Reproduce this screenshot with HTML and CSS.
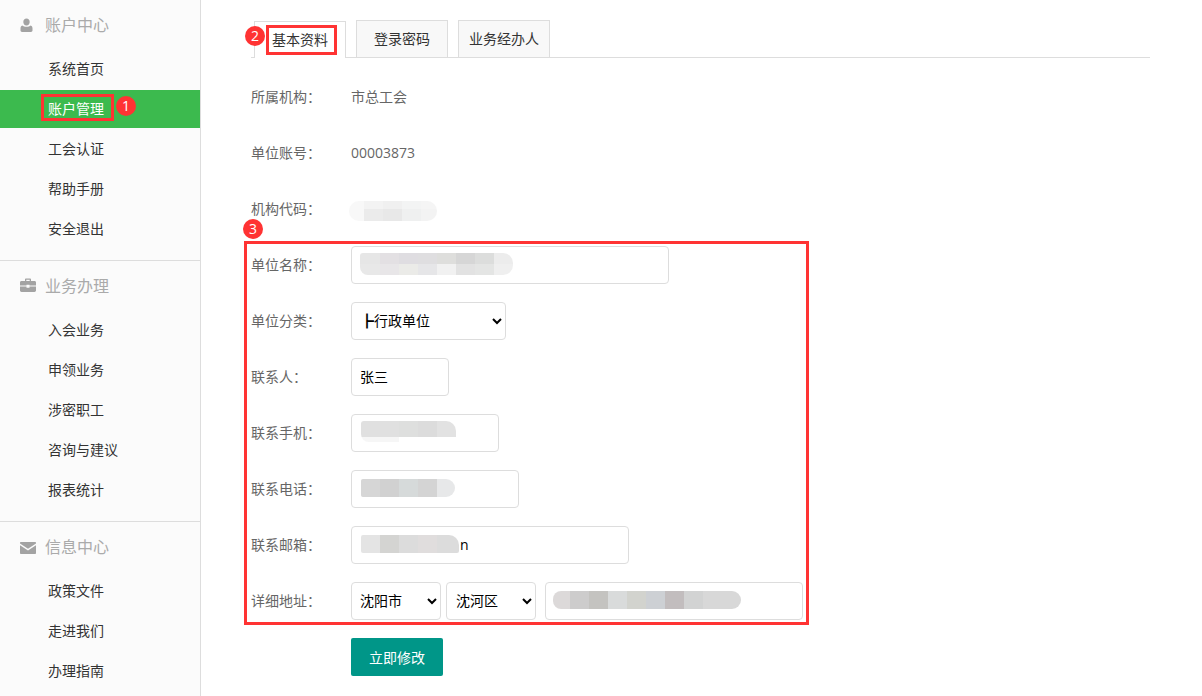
FILE: index.html
```html
<!DOCTYPE html>
<html lang="zh-CN">
<head>
    <meta charset="UTF-8">
    <title>账户管理</title>
    <link rel="stylesheet" href="styles.css">
</head>
<body>
    <div class="sidebar">
        <div class="side-group">
            <div class="side-head">
                <span class="side-icon">
                    <svg width="16" height="16" viewBox="0 0 16 16"><path d="M6.5 1.5c1.9 0 3.2 1.5 3.2 3.4S8.400 8.500 6.500 8.500 3.300 6.800 3.300 4.900 4.600 1.500 6.500 1.500zM2.300 8.400c.8.900 2.500 1.300 4.200 1.300s3.400-.4 4.200-1.300c1.200.3 1.800 1.500 1.800 3.200v2c0 .9-.7 1.400-1.500 1.400H2c-.8 0-1.500-.5-1.500-1.400v-2c0-1.700.6-2.900 1.800-3.200z"/></svg>
                </span>
                账户中心
            </div>
            <a class="side-item">系统首页</a>
            <a class="side-item active">账户管理</a>
            <a class="side-item">工会认证</a>
            <a class="side-item">帮助手册</a>
            <a class="side-item">安全退出</a>
        </div>
        <div class="side-group">
            <div class="side-head">
                <span class="side-icon">
                    <svg width="16" height="16" viewBox="0 1 16 16"><path d="M5 2.500C5 1.900 5.500 1.500 6 1.500h4c.5 0 1 .4 1 1V4h3.500c.8 0 1.500.6 1.500 1.400V8.500H9.500V7.800h-3v.7H0V5.400C0 4.600.7 4 1.500 4H5V2.500zM6.300 2.800V4h3.400V2.800H6.300zM0 9.500h6.500v1.200h3V9.500H16v4.100c0 .8-.7 1.400-1.500 1.400h-13C.7 15 0 14.400 0 13.600V9.500z"/></svg>
                </span>
                业务办理
            </div>
            <a class="side-item">入会业务</a>
            <a class="side-item">申领业务</a>
            <a class="side-item">涉密职工</a>
            <a class="side-item">咨询与建议</a>
            <a class="side-item">报表统计</a>
        </div>
        <div class="side-group">
            <div class="side-head">
                <span class="side-icon">
                    <svg width="16" height="16" viewBox="0 -1 16 16"><path d="M0 2.600C0 2.200.4 2 .8 2h14.400c.4 0 .8.200.8.600v.9L8 8.800 0 3.500v-.9zM0 5.200l8 5.300 8-5.300v8c0 .5-.4.800-.8.800H.8c-.4 0-.8-.3-.8-.8v-8z"/></svg>
                </span>
                信息中心
            </div>
            <a class="side-item">政策文件</a>
            <a class="side-item">走进我们</a>
            <a class="side-item">办理指南</a>
        </div>
    </div>

    <div class="main">
        <div class="tabs">
            <div class="tab tab-current">基本资料</div>
            <div class="tab">登录密码</div>
            <div class="tab">业务经办人</div>
        </div>

        <div class="form-row">
            <label>所属机构：</label>
            <span class="plain-value">市总工会</span>
        </div>
        <div class="form-row">
            <label>单位账号：</label>
            <span class="plain-value">00003873</span>
        </div>
        <div class="form-row">
            <label>机构代码：</label>
            <span class="mosaic mosaic-code"></span>
        </div>
        <div class="form-row">
            <label>单位名称：</label>
            <div class="field">
                <input class="w-318" type="text">
                <span class="mosaic mosaic-name"></span>
            </div>
        </div>
        <div class="form-row">
            <label>单位分类：</label>
            <select class="w-155"><option>┣行政单位</option></select>
        </div>
        <div class="form-row">
            <label>联系人：</label>
            <input class="w-98" type="text" value="张三">
        </div>
        <div class="form-row">
            <label>联系手机：</label>
            <div class="field">
                <input class="w-148" type="text">
                <span class="mosaic mosaic-mobile"></span>
            </div>
        </div>
        <div class="form-row">
            <label>联系电话：</label>
            <div class="field">
                <input class="w-168" type="text">
                <span class="mosaic mosaic-tel"></span>
            </div>
        </div>
        <div class="form-row">
            <label>联系邮箱：</label>
            <div class="field">
                <input class="w-278 mail-input" type="text" value="n">
                <span class="mosaic mosaic-mail"></span>
            </div>
        </div>
        <div class="form-row">
            <label>详细地址：</label>
            <select class="w-90"><option>沈阳市</option></select>
            <select class="w-90 next-select"><option>沈河区</option></select>
            <div class="field next-input">
                <input class="w-258" type="text">
                <span class="mosaic mosaic-addr"></span>
            </div>
        </div>
        <div class="form-row">
            <label></label>
            <button class="submit-btn">立即修改</button>
        </div>
    </div>

    <!-- red marks drawn on top of the screenshot -->
    <div class="mark-box mark-menu"></div>
    <div class="mark-box mark-tab"></div>
    <div class="mark-box mark-form"></div>
    <div class="mark-dot dot-1">1</div>
    <div class="mark-dot dot-2">2</div>
    <div class="mark-dot dot-3">3</div>
</body>
</html>
```

FILE: styles.css
```css
* {
    margin: 0;
    padding: 0;
    box-sizing: border-box;
}

html, body {
    height: 100%;
    overflow: hidden;
}

body {
    position: relative;
    display: flex;
    background: #fff;
    color: #666;
    font-family: "Open Sans", "Noto Sans CJK SC", sans-serif;
    font-size: 14px;
}

.sidebar {
    width: 201px;
    flex-shrink: 0;
    height: 100%;
    background: #fbfbfb;
    border-right: 1px solid #ddd;
}

.side-group {
    padding-bottom: 10px;
    border-bottom: 1px solid #ddd;
}

.side-group:last-child {
    border-bottom: none;
}

.side-head {
    height: 50px;
    display: flex;
    align-items: center;
    padding-left: 20px;
    padding-bottom: 2px;
    font-size: 16px;
    color: #aaa;
}

.side-icon {
    width: 25px;
    height: 16px;
    margin-top: 2px;
    display: flex;
}

.side-icon svg {
    fill: #a3a3a3;
}

.side-item {
    display: block;
    height: 38px;
    line-height: 38px;
    margin-bottom: 2px;
    padding-left: 48px;
    color: #333;
}

.side-item.active {
    background: #3cba4e;
    color: #fff;
}

.main {
    flex: 1;
    padding: 20px 52px 0 50px;
}

.tabs {
    display: flex;
    align-items: flex-end;
    gap: 10px;
    height: 38px;
    padding-left: 3px;
    margin-bottom: 20px;
    border-bottom: 1px solid #ddd;
}

.tab {
    width: 92px;
    height: 37px;
    line-height: 36px;
    text-align: center;
    color: #333;
    background: #f8f8f8;
    border: 1px solid #ddd;
    border-bottom: none;
}

.tab-current {
    height: 37px;
    margin-bottom: -1px;
    background: #fff;
}

.form-row {
    display: flex;
    align-items: center;
    height: 38px;
    margin-bottom: 18px;
}

.form-row label {
    width: 100px;
    flex-shrink: 0;
    padding-bottom: 2px;
    color: #666;
}

.plain-value {
    padding-bottom: 2px;
    color: #666;
}

input, select {
    height: 38px;
    border: 1px solid #ddd;
    border-radius: 4px;
    background: #fff;
    color: #000;
    font: inherit;
    outline: none;
}

input {
    padding: 0 8px 2px;
}

select {
    padding-left: 4px;
    padding-bottom: 2px;
}

.field {
    position: relative;
    display: flex;
}

.next-select {
    margin-left: 5px;
    padding-left: 5px;
}

.next-input {
    margin-left: 9px;
}

.w-90 { width: 90px; }
.w-98 { width: 98px; }
.w-148 { width: 148px; }
.w-155 { width: 155px; }
.w-168 { width: 168px; }
.w-258 { width: 258px; }
.w-278 { width: 278px; }
.w-318 { width: 318px; }

.mail-input {
    padding-left: 108px;
}

.submit-btn {
    width: 92px;
    height: 38px;
    border: none;
    border-radius: 2px;
    background: #009688;
    color: #fff;
    font: inherit;
}

/* blurred-out values */
.mosaic {
    display: block;
    height: 20px;
    border-radius: 3px 10px 10px 8px;
    background-repeat: no-repeat;
}

.field .mosaic {
    position: absolute;
}

.mosaic-code {
    width: 88px;
    margin-left: -2px;
    margin-top: 3px;
    border-radius: 10px;
    background-image:
        linear-gradient(90deg, #f8f8f8 0 15px, #f3f3f3 15px 34px, #f0f0f0 34px 53px, #f3f4f4 53px 72px, #f5f5f5 72px),
        linear-gradient(90deg, #f8f8f8 0 15px, #ebebeb 15px 34px, #e8e8e8 34px 53px, #eff0f0 53px 72px, #f3f3f3 72px);
    background-size: 100% 8px, 100% 12px;
    background-position: top, bottom;
}

.mosaic-name {
    left: 9px;
    top: 7px;
    width: 153px;
    height: 22px;
    background-image:
        linear-gradient(90deg, #e6e6e6 0 20px, #e3e0e3 20px 39px, #dfdde1 39px 58px, #dfdee0 58px 77px, #dededc 77px 96px, #d6d6d6 96px 115px, #dcdddc 115px 134px, #ececec 134px),
        linear-gradient(90deg, #e8e8e8 0 20px, #e8e6e8 20px 39px, #ebebe8 39px 58px, #e6e6e8 58px 77px, #f1f1f1 77px 96px, #e2e2e2 96px 115px, #e4e5e4 115px 134px, #efefef 134px);
    background-size: 100% 11px, 100% 11px;
    background-position: top, bottom;
}

.mosaic-mobile {
    left: 10px;
    top: 7px;
    width: 95px;
    height: 21px;
    border-radius: 3px 10px 0 8px;
    background-image:
        linear-gradient(90deg, #e0e0e0 0 38px, #dedfde 38px 57px, #dcdcdc 57px 76px, #e2e2e2 76px),
        linear-gradient(90deg, #f6f6f6 0 38px, #fff 38px);
    background-size: 100% 16px, 100% 5px;
    background-position: top, bottom;
}

.mosaic-tel {
    left: 10px;
    top: 9px;
    width: 94px;
    height: 18px;
    border-radius: 2px 10px 10px 2px;
    background-image: linear-gradient(90deg, #d6d6d6 0 19px, #d1d1d1 19px 38px, #d6dada 38px 57px, #d4d4d4 57px 76px, #e7e8e9 76px);
}

.mosaic-mail {
    left: 10px;
    top: 9px;
    width: 98px;
    height: 18px;
    border-radius: 2px 10px 2px 2px;
    background-image: linear-gradient(90deg, #e4e4e4 0 19px, #d4d4d2 19px 38px, #dcdcdc 38px 57px, #e0dddd 57px 76px, #dcdcdc 76px);
}

.mosaic-addr {
    left: 8px;
    top: 9px;
    width: 188px;
    height: 18px;
    border-radius: 9px 10px 10px 9px;
    background-image: linear-gradient(90deg, #dcd9d9 0 17px, #cdcccc 17px 36px, #c4c3c0 36px 55px, #d9dbdb 55px 74px, #d2d3ce 74px 93px, #cdd0d4 93px 112px, #c2bdbe 112px 131px, #d2d3d3 131px 150px, #d8d8d8 150px);
}

/* annotations */
.mark-box {
    position: absolute;
    border: 3px solid #f33;
}

.mark-menu {
    left: 41px;
    top: 94px;
    width: 73px;
    height: 27px;
}

.mark-tab {
    left: 266px;
    top: 25px;
    width: 71px;
    height: 30px;
}

.mark-form {
    left: 244px;
    top: 241px;
    width: 565px;
    height: 384px;
}

.mark-dot {
    position: absolute;
    width: 20px;
    height: 20px;
    border-radius: 50%;
    background: #f33;
    color: #fff;
    font-size: 14px;
    line-height: 19px;
    text-align: center;
}

.dot-1 { left: 116px; top: 96px; }
.dot-2 { left: 245px; top: 26px; }
.dot-3 { left: 243px; top: 219px; }
```
